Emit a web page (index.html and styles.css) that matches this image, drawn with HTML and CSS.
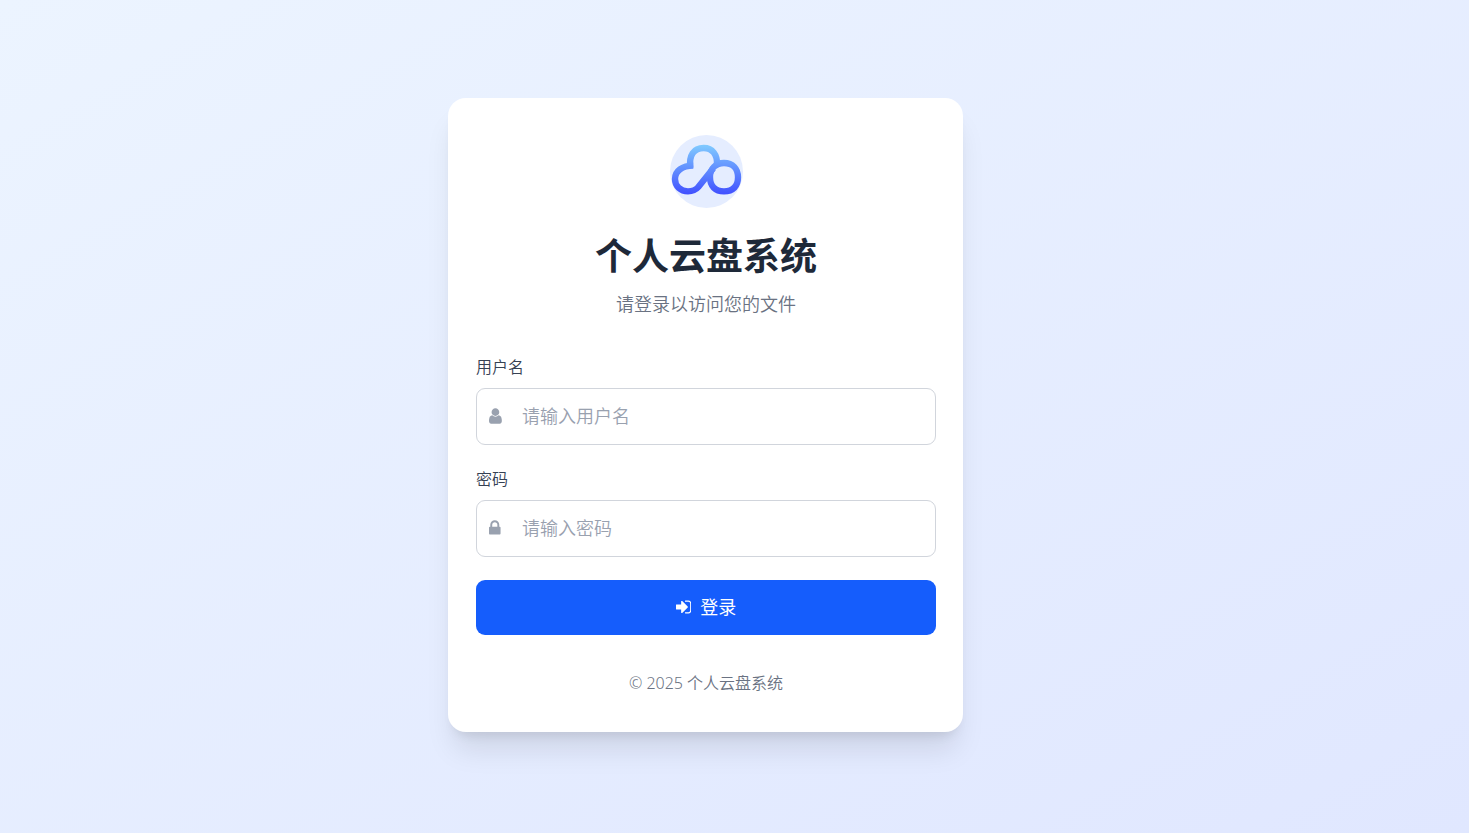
FILE: index.html
```html
<!DOCTYPE html>
<html lang="zh-CN">
<head>
	<meta charset="UTF-8" />
	<meta name="viewport" content="width=device-width, initial-scale=1.0" />
	<title>个人云盘系统</title>
	<link rel="stylesheet" href="styles.css">
</head>
<body>
	<main class="card">
		<div class="header">
			<div class="logo">
				<svg viewBox="27 30 219 219" aria-hidden="true">
					<defs>
						<linearGradient id="cloud" gradientUnits="userSpaceOnUse" x1="0" y1="60" x2="0" y2="208">
							<stop offset="0" stop-color="#80caff" />
							<stop offset="1" stop-color="#4150ff" />
						</linearGradient>
					</defs>
					<g fill="none" stroke="url(#cloud)" stroke-width="19">
						<path d="M97 122C63 122 42 138 42 162C42 184 59 199 81 199C96 199 104 195 112 186L157 130" />
						<path d="M189 114C215 114 231 131 231 157C231 184 216 199 189 199C163 199 147 184 147 156C147 131 164 114 189 114Z" />
						<path d="M88 129C83 91 98 69 128 69C155 69 169 90 168 118" />
					</g>
				</svg>
			</div>
			<h1 class="title">个人云盘系统</h1>
			<p class="subtitle">请登录以访问您的文件</p>
		</div>

		<form class="login-form" action="/login" method="post">
			<div class="field">
				<label for="username" class="field-label">用户名</label>
				<div class="input-wrap">
					<svg class="field-icon" viewBox="0 0 1280 1792" aria-hidden="true">
						<path d="M1280 1399q0 109-62.5 187t-150.5 78h-854q-88 0-150.5-78t-62.5-187q0-85 8.5-160.5t31.5-152 58.5-131 94-89 134.5-34.5q131 128 313 128t313-128q76 0 134.5 34.5t94 89 58.5 131 31.5 152 8.5 160.5zm-256-887q0 159-112.5 271.5t-271.5 112.5-271.5-112.5-112.5-271.5 112.5-271.5 271.5-112.5 271.5 112.5 112.5 271.5z" />
					</svg>
					<input type="text" name="username" id="username" class="text-input" placeholder="请输入用户名" required />
				</div>
			</div>

			<div class="field">
				<label for="password" class="field-label">密码</label>
				<div class="input-wrap">
					<svg class="field-icon" viewBox="0 0 1152 1792" aria-hidden="true">
						<path d="M320 768h512v-192q0-106-75-181t-181-75-181 75-75 181v192zm832 96v576q0 40-28 68t-68 28h-960q-40 0-68-28t-28-68v-576q0-40 28-68t68-28h32v-192q0-184 132-316t316-132 316 132 132 316v192h32q40 0 68 28t28 68z" />
					</svg>
					<input type="password" name="password" id="password" class="text-input" placeholder="请输入密码" required />
				</div>
			</div>

			<button type="submit" class="submit-btn">
				<svg class="btn-icon" viewBox="0 0 1536 1792" aria-hidden="true">
					<path d="M1184 896q0 26-19 45l-544 544q-19 19-45 19t-45-19-19-45v-288h-448q-26 0-45-19t-19-45v-384q0-26 19-45t45-19h448v-288q0-26 19-45t45-19 45 19l544 544q19 19 19 45zm352-352v704q0 119-84.5 203.5t-203.5 84.5h-320q-13 0-22.5-9.5t-9.5-22.5q0-4-1-20t-.5-26.5 3-23.5 10-19.5 20.5-6.5h320q66 0 113-47t47-113v-704q0-66-47-113t-113-47h-312l-11.5-1-11.5-3-8-5.5-7-9-2-13.5q0-4-1-20t-.5-26.5 3-23.5 10-19.5 20.5-6.5h320q119 0 203.5 84.5t84.5 203.5z" />
				</svg>
				登录
			</button>
		</form>

		<p class="footer">© 2025 个人云盘系统</p>
	</main>
</body>
</html>
```
FILE: styles.css
```css
* {
	margin: 0;
	padding: 0;
	box-sizing: border-box;
}

body {
	font-family: 'Noto Sans', 'Noto Sans CJK SC', sans-serif;
	font-size: 18px;
	line-height: 28px;
	font-weight: 350;
	background: linear-gradient(to bottom right, #ecf4ff, #e0e7ff);
	min-height: 100vh;
	padding: 0 58px 4px 0;
	display: flex;
	align-items: center;
	justify-content: center;
	color: #1e2939;
}

.card {
	background: #fff;
	width: 100%;
	max-width: 515px;
	padding: 37px 27px 37px 28px;
	border-radius: 18px;
	box-shadow: 0 23px 29px -6px rgba(0, 0, 0, 0.1), 0 9px 12px -7px rgba(0, 0, 0, 0.1);
}

.header {
	display: flex;
	flex-direction: column;
	align-items: center;
	text-align: center;
	margin-bottom: 38px;
}

.logo {
	width: 73px;
	height: 73px;
	border-radius: 50%;
	background: #e5edff;
	margin-bottom: 27px;
}

.logo svg {
	display: block;
	width: 100%;
	height: 100%;
}

.title {
	font-size: 37px;
	line-height: 42px;
	font-weight: 700;
	margin-bottom: 13px;
}

.subtitle {
	color: #6a7282;
}

.field {
	margin-bottom: 23px;
}

.field-label {
	display: block;
	font-size: 16px;
	line-height: 22px;
	margin-bottom: 10px;
	color: #364153;
}

.input-wrap {
	position: relative;
}

/* icon sits over the left padding of the input */
.field-icon {
	position: absolute;
	top: 0;
	bottom: 0;
	left: 13px;
	height: 18px;
	margin: auto 0;
	fill: #99a1af;
}

.text-input {
	display: block;
	width: 100%;
	height: 57px;
	padding: 0 14px 0 45px;
	border: 1px solid #d1d5dc;
	border-radius: 9px;
	background: #fff;
	font: inherit;
	color: inherit;
	outline: none;
}

.text-input::placeholder {
	color: #99a1af;
}

.text-input:focus {
	border-color: #155dfc;
	box-shadow: 0 0 0 2px rgba(21, 93, 252, 0.2);
}

.submit-btn {
	display: flex;
	align-items: center;
	justify-content: center;
	gap: 9px;
	width: 100%;
	height: 55px;
	border: none;
	border-radius: 9px;
	background: #155dfc;
	color: #fff;
	font: inherit;
	font-weight: 400;
	cursor: pointer;
}

.submit-btn:hover {
	background: #1447e6;
}

.btn-icon {
	height: 18px;
	fill: currentColor;
}

.footer {
	margin-top: 36px;
	font-size: 16px;
	line-height: 24px;
	text-align: center;
	color: #6a7282;
}
```
